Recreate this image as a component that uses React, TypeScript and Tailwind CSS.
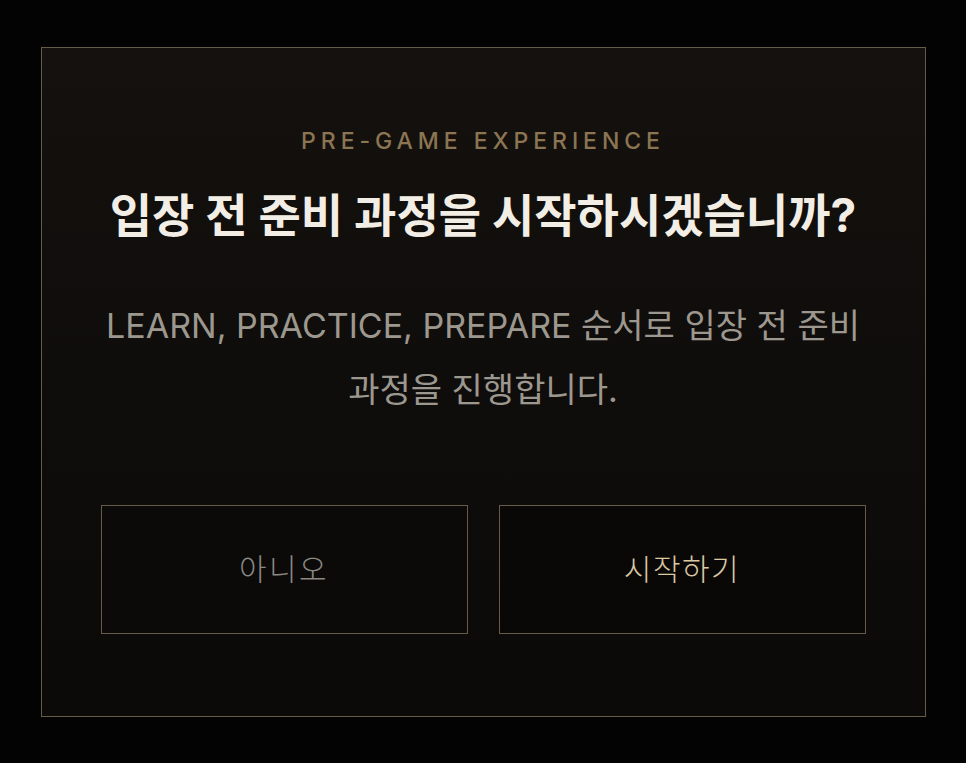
import React from "react";

export default function App() {
  const font = { fontFamily: 'Inter, "Noto Sans CJK KR", sans-serif' };
  return (
    <div className="w-[966px] h-[763px] bg-[#030303] flex items-start justify-center pt-[47px]" style={font}>
      <div className="w-[885px] h-[670px] border border-[#665b47] bg-gradient-to-b from-[#14110e] via-[#0f0d0b] to-[#0c0a09] flex flex-col items-center px-[59px]">
        <div className="mt-[79px] text-[23px] leading-[28px] tracking-[0.215em] text-[#8b7552] font-medium">
          PRE-GAME EXPERIENCE
        </div>
        <div className="mt-[32px] text-[46px] leading-[56px] font-bold text-[#f2eee5] whitespace-nowrap">
          입장 전 준비 과정을 시작하시겠습니까?
        </div>
        <div className="mt-[51px] text-[34px] leading-[64px] text-[#9d988f] text-center w-[780px]">
          LEARN, PRACTICE, PREPARE 순서로 입장 전 준비
          <br />
          과정을 진행합니다.
        </div>
        <div className="mt-[83px] w-full grid grid-cols-2 gap-[31px]">
          <button className="h-[129px] border border-[#665b47] bg-[#0b0a09] text-[30px] font-light text-[#8c8882] tracking-[0.08em]">
            아니오
          </button>
          <button className="h-[129px] border border-[#665b47] bg-[#0a0807] text-[30px] font-light text-[#dcc9a2] tracking-[0.05em]">
            시작하기
          </button>
        </div>
      </div>
    </div>
  );
}
